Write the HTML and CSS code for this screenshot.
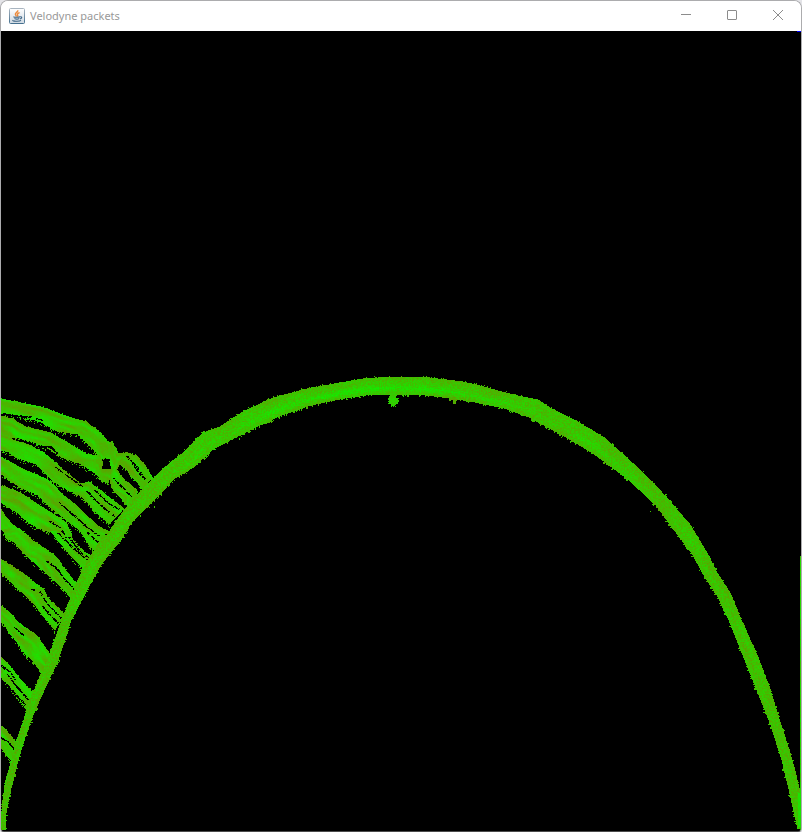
FILE: index.html
```html
<!DOCTYPE html>
<html lang="en">
<head>
<meta charset="utf-8">
<meta name="viewport" content="width=device-width, initial-scale=1">
<title>Velodyne packets</title>
<link rel="stylesheet" href="styles.css">
</head>
<body>
<div class="window">
  <header class="titlebar">
    <svg class="app-icon" viewBox="0 0 16 16" aria-hidden="true">
      <defs>
        <linearGradient id="face" x1="0" y1="0" x2="0" y2="1">
          <stop offset="0" stop-color="#ffffff"/>
          <stop offset="1" stop-color="#cfd9e2"/>
        </linearGradient>
        <linearGradient id="edge" x1="0" y1="0" x2="0" y2="1">
          <stop offset="0" stop-color="#a9b5c0"/>
          <stop offset="1" stop-color="#45708f"/>
        </linearGradient>
      </defs>
      <rect x="0.5" y="0.5" width="15" height="15" rx="1" fill="url(#face)" stroke="url(#edge)"/>
      <path d="M8.7 2.2C9.6 4 5.8 4.7 6.4 6.6c.2.7.9 1.2 1.2 1.9M10.6 4.6C8.800 5.200 7.800 6 8.600 7c.4.6.3 1-.2 1.600" fill="none" stroke="#ec8a3c" stroke-width="1.4"/>
      <path d="M5.200 8.700c-1.600.7 4.300.9 5.900.1M5.500 10.500c1.300.6 3.600.6 4.800 0M4 12.300c-1.500 1 6.800 1.300 8 .1M11.200 8.800c2.200-.5 1.900 1.700-.2 2.200" fill="none" stroke="#3c6485" stroke-width="1.1"/>
    </svg>
    <h1 class="title">Velodyne packets</h1>
    <div class="controls">
      <button class="control" type="button" aria-label="Minimize">
        <svg viewBox="0 0 12 12"><path d="M1 5.500h10"/></svg>
      </button>
      <button class="control" type="button" aria-label="Maximize">
        <svg viewBox="0 0 12 12"><rect x="1.500" y="1.500" width="9" height="9" rx="0.5"/></svg>
      </button>
      <button class="control" type="button" aria-label="Close">
        <svg viewBox="0 0 12 12"><path d="M1 1l10 10M11 1L1 11"/></svg>
      </button>
    </div>
  </header>
  <main class="view">
    <canvas class="cloud" id="cloud" width="800" height="800"></canvas>
  </main>
</div>
<script src="cloud.js"></script>
</body>
</html>
```
FILE: styles.css
```css
* {
  box-sizing: border-box;
}

body {
  margin: 0;
  background: #e4e4e8;
  font-family: "Noto Sans", "Open Sans", sans-serif;
}

.window {
  display: flex;
  flex-direction: column;
  height: 100vh;
  border: 1px solid #acacae;
  border-bottom-color: #4c4c4c;
  border-radius: 8px 8px 4px 4px;
  background: #fff;
  overflow: hidden;
}

.titlebar {
  display: flex;
  flex: none;
  align-items: center;
  height: 30px;
  padding-left: 8px;
  background: #fff;
}

.app-icon {
  width: 16px;
  height: 16px;
  margin-right: 5px;
}

.title {
  flex: 1;
  margin: 0;
  color: #999;
  font-size: 11px;
  font-weight: 400;
  line-height: 16px;
}

.controls {
  display: flex;
  align-self: flex-start;
}

.control {
  display: flex;
  align-items: center;
  justify-content: center;
  width: 46px;
  height: 28px;
  padding: 0;
  border: 0;
  background: transparent;
}

.control svg {
  width: 12px;
  height: 12px;
  fill: none;
  stroke: #8c8c8c;
  stroke-width: 1;
}

.view {
  flex: 1;
  min-height: 0;
  background: #000;
}

.cloud {
  display: block;
  width: 100%;
  height: 100%;
  image-rendering: pixelated;
}
```
FILE: cloud.js
```js
const canvas = document.getElementById("cloud");
const ctx = canvas.getContext("2d");
const W = canvas.width;
const H = canvas.height;
const frame = ctx.createImageData(W, H);
const data = frame.data;

for (let i = 3; i < data.length; i += 4) data[i] = 255;

let seed = 20177;
function random() {
  seed = (seed * 1664525 + 1013904223) >>> 0;
  return seed / 4294967296;
}

function hash(a, b) {
  let h = (Math.imul(a, 374761393) + Math.imul(b, 668265263)) | 0;
  h = Math.imul(h ^ (h >>> 13), 1274126177);
  return ((h ^ (h >>> 16)) >>> 0) / 4294967296;
}

function smooth(u, v) {
  const a = Math.floor(u), b = Math.floor(v);
  const p = u - a, q = v - b;
  const top = hash(a, b) * (1 - p) + hash(a + 1, b) * p;
  const low = hash(a, b + 1) * (1 - p) + hash(a + 1, b + 1) * p;
  return top * (1 - q) + low * q;
}

function plot(x, y, r, g, b) {
  x = Math.floor(x);
  y = Math.floor(y);
  if (x < 0 || y < 0 || x >= W || y >= H) return;
  const i = (y * W + x) * 4;
  data[i] = r;
  data[i + 1] = g;
  data[i + 2] = b;
}

// Low returns are bright green, strong returns drift toward olive.
function point(x, y, intensity) {
  const r = Math.round(Math.max(22, Math.min(105, intensity)));
  plot(x, y, r, 255 - r, 0);
}

// Each section is [x, y] on one edge followed by [x, y] on the other edge.
function band(sections, shade) {
  let run = 0;
  for (let i = 0; i + 1 < sections.length; i++) {
    const [ax, ay, bx, by] = sections[i];
    const [cx, cy, dx, dy] = sections[i + 1];
    const length = Math.max(Math.hypot(cx - ax, cy - ay), Math.hypot(dx - bx, dy - by));
    const steps = Math.ceil(length * 2) + 1;
    for (let k = 0; k < steps; k++) {
      const s = k / steps;
      const px = ax + (cx - ax) * s, py = ay + (cy - ay) * s;
      const qx = bx + (dx - bx) * s, qy = by + (dy - by) * s;
      const width = Math.hypot(qx - px, qy - py);
      const cross = Math.ceil(width * 2) + 1;
      const start = random() < 0.12 ? -random() * 1.6 / (width + 1) : 0;
      const end = 1 + (random() < 0.14 ? random() * 2.4 / (width + 1) : 0);
      for (let m = 0; m <= cross; m++) {
        const t = start + (m / cross) * (end - start);
        point(px + (qx - px) * t, py + (qy - py) * t, shade(run + s * length, t, width, px));
      }
    }
    run += length;
  }
}

const arch = [
  [1,829,5,829],[2,812,6,812],[3,800,8,800],[6,780,13,780],[12,760,18,760],
  [17,740,24,740],[24,720,31,720],[30,700,38,703],[39,680,48,681],[48,660,57,662],
  [55,640,64,642],[62,620,70,622],[70,600,80,603],[78,580,91,582],[88,560,101,564],
  [98,545,112,550],[107,535,120,541],[123,512,130,524],[137,495,147,507],
  [153,479,160,494],[167,466,173,479],[183,453,193,467],[203,433,213,449],
  [220,427,232,439],[243,412,252,429],[273,398,279,416],[307,389,311,405],
  [340,383,344,398],[363,379,365,395],[393,377,393,394],[430,378,427,395],
  [463,382,458,399],[480,386,475,402],[513,395,504,408],[538,400,529,417],
  [550,408,542,424],[570,418,561,434],[603,437,593,453],[640,470,628,479],
  [667,498,656,505],[690,525,675,531],[707,553,692,553],[717,573,705,577],
  [730,593,717,595],[743,625,729,620],[757,655,743,655],[770,690,757,690],
  [780,722,771,725],[792,760,782,760],[800,792,789,789],[801,829,798,829]
];

// Stripes of the side wall, at three units per pixel with their own top offset.
const walls = [
  [390, [[5,30,5,66],[68,42,60,78],[130,55,120,94],[190,78,170,122],[260,100,235,132],[300,130,270,168],[330,165,300,198],[352,200,330,215],[365,215,340,240]]],
  [390, [[335,155,325,170],[350,185,335,200],[362,210,345,225]]],
  [390, [[350,195,350,205],[382,190,370,210],[412,202,395,214],[435,230,418,238],[458,268,442,278]]],
  [390, [[370,205,360,222],[390,220,380,238],[415,255,400,262],[448,290,430,300]]],
  [390, [[365,210,330,240],[350,240,330,270],[375,275,340,300],[415,298,370,330],[405,325,385,348]]],
  [390, [[5,82,5,155],[40,90,30,145],[72,112,55,142],[150,130,130,166],[210,165,190,203],[260,195,240,220],[300,200,285,248],[312,235,305,270],[335,245,325,280]]],
  [390, [[5,140,5,180],[30,148,25,185],[60,153,50,203],[130,190,110,222],[180,235,160,274],[240,283,210,302],[270,280,250,322],[320,320,290,368],[372,358,330,402]]],
  [390, [[5,205,5,252],[70,240,60,292],[140,270,115,314],[180,310,150,350],[230,350,200,390],[290,408,245,425],[328,430,270,450]]],
  [390, [[5,290,5,338],[60,310,50,366],[120,350,90,400],[160,375,135,422],[198,400,165,427],[215,440,180,450]]],
  [390, [[3,360,3,405],[18,385,12,425],[30,400,20,445],[92,448,50,455]]],
  [530, [[200,0,155,5],[225,42,190,50],[250,68,220,85],[290,90,258,124]]],
  [530, [[270,0,240,0],[315,20,270,50],[330,35,295,65]]],
  [530, [[15,0,12,12],[60,0,35,28],[100,35,70,65],[165,80,95,90],[182,105,140,130],[210,140,175,160],[242,185,215,205]]],
  [530, [[3,90,3,126],[65,130,45,166],[118,172,90,208],[150,215,118,240],[195,258,165,300]]],
  [530, [[105,175,110,190],[130,178,125,192],[142,205,132,210]]],
  [530, [[3,230,3,270],[28,250,25,300],[60,285,50,335],[110,318,80,375],[135,355,105,398],[150,375,125,430]]],
  [530, [[3,385,3,424],[30,412,12,445],[60,450,25,465]]],
  [680, [[20,-30,5,-15],[60,0,20,5],[100,43,60,60],[110,65,88,98]]],
  [680, [[3,140,3,200],[12,148,10,210],[28,165,20,225],[58,205,42,248]]]
];

// Shadows between neighbouring scan lines.
const gaps = [
  [390, 3, [5,72,40,77,70,80,100,82,130,92]],
  [390, 5, [40,147,75,156,110,170,150,170,180,195]],
  [390, 16, [320,208,316,235]],
  [390, 8, [360,240,375,260,405,285,418,298]],
  [390, 3, [382,200,410,230,438,270]],
  [390, 2, [168,233,205,260,250,292]],
  [390, 3, [262,305,300,345,345,380]],
  [390, 2, [285,300,325,340,360,360]],
  [390, 3, [180,340,220,375,260,410,300,440]],
  [390, 3, [150,395,180,412,200,445]],
  [390, 2, [340,265,370,295,395,320]],
  [530, 3, [175,10,210,45,265,92]],
  [530, 3, [205,20,240,65,275,90]],
  [530, 4, [255,0,285,30,300,42]],
  [530, 3, [140,93,165,110,195,148,225,180]],
  [530, 2, [95,178,120,185,145,225,185,265]],
  [530, 3, [125,225,150,255,175,280]],
  [530, 2, [45,293,75,320]],
  [530, 3, [5,408,30,425,45,450]],
  [680, 3, [25,-15,50,20,85,60]],
  [680, 3, [10,5,40,35,80,80]],
  [680, 4, [5,175,25,185,45,210]]
];

function toPixels(top, x, y) {
  return [x / 3, y / 3 + top - 31];
}

walls.forEach(([top, sections], index) => {
  const scaled = sections.map(([ax, ay, bx, by]) =>
    [...toPixels(top, ax - 3, ay - 2), ...toPixels(top, bx - 3, by)]);
  band(scaled, (run, t, width) =>
    28 + 66 * smooth(run / 15 + index * 19, t * width / 3 + index * 7) + (random() - 0.5) * 16);

  // Stray returns just under each stripe.
  for (let i = 0; i + 1 < scaled.length; i++) {
    const [, , ax, ay] = scaled[i];
    const [, , bx, by] = scaled[i + 1];
    for (let k = 0; k < Math.abs(bx - ax) / 2; k++) {
      const s = random();
      point(ax + (bx - ax) * s, ay + (by - ay) * s + 1 + random() * 3, 45 + random() * 35);
    }
  }
});

gaps.forEach(([top, thickness, line]) => {
  for (let i = 0; i + 3 < line.length; i += 2) {
    const [ax, ay] = toPixels(top, line[i] - 3, line[i + 1]);
    const [bx, by] = toPixels(top, line[i + 2] - 3, line[i + 3]);
    const steps = Math.ceil(Math.hypot(bx - ax, by - ay));
    for (let k = 0; k < steps; k++) {
      if (thickness < 7 && random() < 0.3) continue;
      const s = k / steps;
      const reach = thickness / 6;
      for (let d = -reach; d <= reach; d += 0.5) {
        for (let e = 0; e < (thickness > 6 ? 2 : 1); e++) {
          plot(ax + (bx - ax) * s + d, ay + (by - ay) * s + e + (random() - 0.5) * 1.2, 0, 0, 0);
        }
      }
    }
  }
});

band(arch.map(([ax, ay, bx, by]) => [ax - 1, ay - 31, bx - 1, by - 31]), (run, t, width, x) => {
  const crown = Math.max(0, 1 - Math.abs(x - 380) / 330);
  const core = Math.exp(-Math.pow((t - 0.68) / 0.2, 2)) * crown;
  const drift = smooth(run / 26, t * 3) * 22;
  return 54 - core * 32 + drift + (random() - 0.5) * 42;
});

// Fixtures hanging from the ceiling of the arch.
function cluster(x, y, w, h, base) {
  for (let j = 0; j < h; j++) {
    for (let i = 0; i < w; i++) {
      const edge = i === 0 || i === w - 1 || j === h - 1;
      if (edge && random() < 0.4) continue;
      point(x - 1 + i, y - 31 + j, base + random() * 25);
    }
  }
}
cluster(389, 393, 8, 6, 42);
cluster(388, 398, 11, 6, 34);
cluster(391, 403, 5, 4, 34);
cluster(449, 397, 7, 4, 70);
cluster(452, 400, 4, 4, 70);
cluster(268, 418, 4, 5, 65);
point(238, 407, 40);
point(238, 408, 40);
point(649, 480, 60);
point(665, 463, 40);
point(153, 475, 60);
point(153, 476, 60);

for (let y = 525; y < H; y++) {
  point(799, y, 24 + random() * 38);
}
for (let y = 762; y < 796; y++) {
  for (let x = 797; x < W; x++) point(x, y, 20 + random() * 20);
}
for (let x = 796; x < W; x++) plot(x, 0, 0, 0, 255);

ctx.putImageData(frame, 0, 0);
```
